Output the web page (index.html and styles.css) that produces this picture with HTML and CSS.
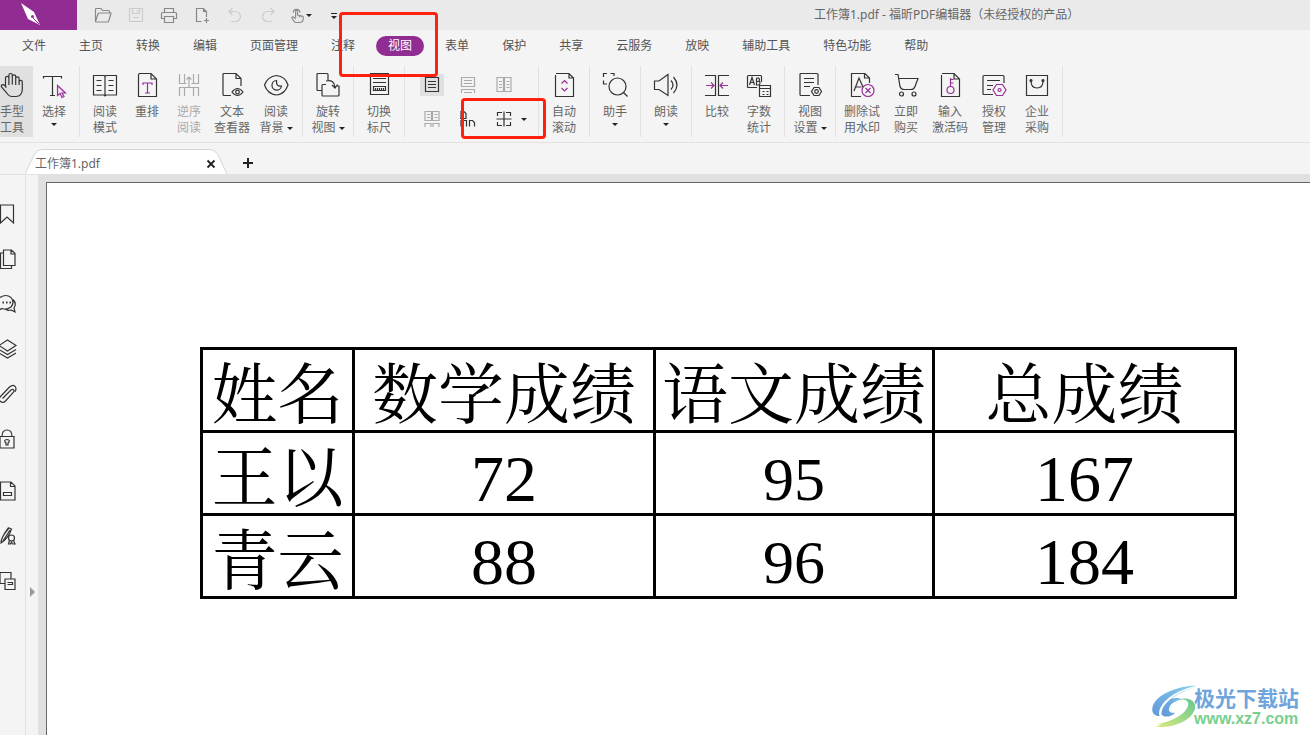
FILE: index.html
```html
<!DOCTYPE html>
<html lang="zh-CN">
<head>
<meta charset="utf-8">
<title>工作簿1.pdf - 福昕PDF编辑器</title>
<link rel="stylesheet" href="styles.css">
</head>
<body>
<header class="titlebar">
  <div class="brand"><svg width="22" height="24" viewBox="0 0 22 24"><path d="M1 1l13 9 6 13-12-6z" fill="#fff"/><path d="M19 22l-6-6" stroke="#912d92" stroke-width="1"/><circle cx="12.500" cy="14.500" r="1.500" fill="#912d92"/></svg></div>
  <div class="quick">
    <button aria-label="打开"><svg class="ico" viewBox="0 0 18 18"><path d="M1.500 15V3.500q0-1 1-1H7l1.500 2h6q1 0 1 1V7M1.500 15.500L4 8q.3-1 1.300-1H17l-2.200 8q-.3 1-1.300 1H2.500q-1 0-1-1"/></svg></button>
    <button aria-label="保存" disabled><svg class="ico" viewBox="0 0 18 18"><path d="M2.500 2.500h13v13h-13zM5.500 2.500v5h7v-5M10.500 4v2M6 11.500h6"/></svg></button>
    <button aria-label="打印"><svg class="ico" viewBox="0 0 18 18"><path d="M4.500 6V2.500h9V6M4.500 12.500h-3v-5q0-1 1-1h13q1 0 1 1v5h-3M4.500 10.500h9v6h-9z"/></svg></button>
    <button aria-label="新建"><svg class="ico" viewBox="0 0 18 18"><path d="M8.500 15.500h-5v-13h7l3 3V11M10.500 2.500v3h3M13.500 12v5M11 14.500h5"/></svg></button>
    <button aria-label="撤销" disabled><svg class="ico" viewBox="0 0 18 18"><path d="M6.500 2L3 5.500 6.500 9M3 5.500h6.500a5 5 0 0 1 0 10H5"/></svg></button>
    <button aria-label="重做" disabled><svg class="ico" viewBox="0 0 18 18"><path d="M11.500 2L15 5.500 11.500 9M15 5.500H8.500a5 5 0 0 0 0 10H13"/></svg></button>
    <button aria-label="触摸模式" class="touch"><svg class="ico" viewBox="0 0 18 18"><path d="M7 12V5a1 1 0 0 1 2 0v4l5 1q1 0 1 1v3q-.5 3-4 3H8q-2 0-3-2l-2-3q0-1.500 1.500-1L7 13M11 9.500v2M13 10v1.500M4.500 6.500a3.500 3.500 0 1 1 7 0"/></svg><span class="caret"></span></button>
    <button aria-label="自定义快速访问" class="custom"><span class="bar"></span><span class="caret"></span></button>
  </div>
  <h1 class="title">工作簿1.pdf - 福昕PDF编辑器（未经授权的产品）</h1>
</header>
<nav class="menu">
  <button>文件</button><button>主页</button><button>转换</button><button>编辑</button><button>页面管理</button><button>注释</button><button class="active">视图</button><button>表单</button><button>保护</button><button>共享</button><button>云服务</button><button>放映</button><button>辅助工具</button><button>特色功能</button><button>帮助</button>
</nav>
<section class="ribbon" aria-label="视图">
  <div class="group first">
    <button class="tool on"><svg class="big" viewBox="0 0 26 26"><path d="M6.500 15.500V6a1.700 1.700 0 0 1 3.400 0v7M9.900 6V3.200a1.700 1.700 0 0 1 3.400 0V12.500M13.300 4.500a1.700 1.700 0 0 1 3.400 0V13M16.700 9V6.500a1.700 1.700 0 0 1 3.400 0V13M20.100 10a1.600 1.600 0 0 1 3.200 0v7c0 4.500-2 7.500-6.300 7.500h-4c-3 0-4.500-2-6-4.500l-4.500-5c-1-2 1.600-3 3-1.700l2 2"/></svg>手型<br>工具</button>
    <button class="tool"><svg class="big" viewBox="0 0 26 26"><path d="M2.500 6.500V4.500h18v2M11.500 4.500v19M9 23.500h5"/><path class="p" d="M16.500 13.500v10l2.500-2 2 4 2-1-2-3.500h3.500z" fill="#f7e3f7"/></svg>选择<span class="caret"></span></button>
  </div>
  <div class="group">
    <button class="tool"><svg class="big" viewBox="0 0 26 26"><path d="M1.500 3.500h10.500l1 1 1-1h10.500v19.500H14l-1 1-1-1H1.500zM13 4.500V24M4.500 8.500h5M4.500 13.500h5M4.500 18.500h5M16.500 8.500h5M16.500 13.500h5M16.500 18.500h5"/></svg>阅读<br>模式</button>
    <button class="tool"><svg class="big" viewBox="0 0 26 26"><path d="M5 1.500h12l5.500 5.500v17.500h-18V3q0-1.500 1.500-1.500M17 1.500v5.500h5.500"/><path class="p" d="M9 13v-2h9v2M13.500 11v10M11 21h5"/></svg>重排</button>
    <button class="tool" disabled><svg class="big" viewBox="0 0 26 26"><path d="M3.500 2v9.500h5V2M22.500 2v9.500h-5V2M3.500 24v-8.500h5V24M22.500 24v-8.500h-5V24M8.500 11.500h2M15.500 11.500h2M8.500 15.500h9M13 15.500V5M10.500 7.500L13 5l2.500 2.500"/></svg>逆序<br>阅读</button>
    <button class="tool wide"><svg class="big" viewBox="0 0 26 26"><path d="M12 23.500H5q-1 0-1-1v-20q0-1 1-1h12l5 5V14M17 1.500v5h5"/><path d="M13 20q5.500-7 11 0-5.500 7-11 0z"/><circle cx="18.500" cy="20" r="1.800"/></svg>文本<br>查看器</button>
    <button class="tool wide"><svg class="big" viewBox="0 0 26 26"><path d="M1.500 13q3-8.500 12-9.500 9 1 11.500 9.500-3 9-11.500 10-9-1-12-10z"/><path d="M13.500 8.500a4.800 4.800 0 1 0 5 5.500q-5.500 1-5-5.500z"/></svg>阅读<br>背景<span class="caret in"></span></button>
  </div>
  <div class="group">
    <button class="tool"><svg class="big" viewBox="0 0 26 26"><path d="M7 18.500H3q-1 0-1-1v-15q0-1 1-1h9q1 0 1 1V8"/><path d="M11 12.500H8q-1 0-1 1v9.500q0 1 1 1h15q1 0 1-1v-9h-3M11 9q8-2 9 6M17 13l3 3 2.500-3.500"/></svg>旋转<br>视图<span class="caret in"></span></button>
  </div>
  <div class="group">
    <button class="tool"><svg class="big" viewBox="0 0 26 26"><path d="M4.500 1.500h18v21h-18zM7 6.500h13M7 10.500h13M7.500 14.500h12v4h-12zM9.500 18v-2M11.500 18v-2M13.500 18v-2M15.500 18v-2M17.500 18v-2"/></svg>切换<br>标尺</button>
  </div>
  <div class="group layouts">
    <button aria-label="单页" class="on"><svg class="mid" viewBox="0 0 18 18"><path d="M2.500 1.500h13v14h-13zM5 5.500h8M5 8.500h8M5 11.500h8"/></svg></button>
    <button aria-label="连续" class="dim"><svg class="mid" viewBox="0 0 18 18"><path d="M2.500 1.500h13v9h-13zM5 4.500h8M5 7.500h8M2.500 17v-3.500h13V17M5 16.500h8"/></svg></button>
    <button aria-label="双页" class="dim"><svg class="mid" viewBox="0 0 18 18"><path d="M2 1.500h6.500v14H2zM9.500 1.500H16v14H9.500zM4 5.500h3M4 8.500h3M4 11.500h3M11.500 5.500h3M11.500 8.500h3M11.500 11.500h3"/></svg></button>
    <button aria-label="连续双页" class="dim"><svg class="mid" viewBox="0 0 18 18"><path d="M2 1.500h6.500v9H2zM9.500 1.500H16v9H9.500zM4 4.500h3M4 7.500h3M11.500 4.500h3M11.500 7.500h3M2 17v-3.500h6V17M10 17v-3.500h6V17"/></svg></button>
    <button aria-label="封面页"><svg class="mid" viewBox="0 0 18 18"><path d="M2 8.500v-7h3l2 2v5M1 8.500h6.500M2 16.500v-6h5.500v6M10.500 16.500v-6h3l2 2v4"/></svg></button>
    <button aria-label="拆分"><svg class="mid" viewBox="0 0 18 18"><path d="M1.500 9h15M9 1.500v15M2.500 6V2.500H7M11 2.500h4.500V6M2.500 12v3.500H7M11 15.500h4.500V12"/></svg><span class="caret"></span></button>
  </div>
  <div class="group">
    <button class="tool"><svg class="big" viewBox="0 0 26 26"><path d="M5 1.500h13l4.500 4.500v18.500h-18V3M18 1.500v4.500h4.500"/><path class="p" d="M10.500 11.500l3-3 3 3M10.500 16l3 3 3-3"/></svg>自动<br>滚动</button>
  </div>
  <div class="group">
    <button class="tool"><svg class="big" viewBox="0 0 26 26"><path d="M1.500 5V1.500H5M8.500 1.500H12V4M1.500 8.500V12H5"/><circle cx="15.500" cy="14.500" r="8.500"/><path d="M21.500 20.500l4 4"/></svg>助手<span class="caret"></span></button>
  </div>
  <div class="group">
    <button class="tool"><svg class="big" viewBox="0 0 26 26"><path d="M1.500 9H6l9-6.500v21L6 17.500H1.500zM18 8.500q4 4.500 0 9M20.500 5q7 8 0 16"/></svg>朗读<span class="caret"></span></button>
  </div>
  <div class="group">
    <button class="tool"><svg class="big" viewBox="0 0 26 26"><path d="M1 3.500h10.500V23.500H1M25 3.500H14.500V23.500H25"/><path class="p" d="M2 13.500h8M7 10.500l3 3-3 3M24 13.500h-8M19 10.500l-3 3 3 3"/></svg>比较</button>
    <button class="tool"><svg class="big" viewBox="0 0 26 26"><path d="M11 15.500H2.500q-1 0-1-1v-10q0-1 1-1h12q1 0 1 1V10M3.500 13l2.500-7.500L8.500 13M4.500 10.500h3M10.500 6v7h2q1.500-.3 1.500-2t-1.500-1.500h-2M10.500 6h2q2 1.700 0 3.500M13.500 13.500v11h11v-11zM13.500 16.500h11M16.500 19.500h2M20.500 19.500h2M16.500 22.500h2M20.500 22.500h2"/></svg>字数<br>统计</button>
  </div>
  <div class="group">
    <button class="tool"><svg class="big" viewBox="0 0 26 26"><path d="M13 23.500H4q-1 0-1-1v-20q0-1 1-1h16q1 0 1 1V13M7 6.500h10M7 10.500h10M7 14.500h6"/><path d="M17 15.500h5l2.500 4-2.500 4h-5l-2.500-4z"/><circle cx="19.500" cy="19.500" r="1.800"/></svg>视图<br>设置<span class="caret in"></span></button>
  </div>
  <div class="group">
    <button class="tool wide"><svg class="big" viewBox="0 0 26 26"><path d="M12 24.500H2.500v-23H16l4.500 4.500v5M15.500 1.500V6h5M5 19l5-13 4 9M6.500 15h6"/><g class="p"><circle cx="19" cy="18.500" r="6"/><path d="M16.500 16l5 5M21.500 16l-5 5"/></g></svg>删除试<br>用水印</button>
    <button class="tool wide"><svg class="big" viewBox="0 0 26 26"><path d="M2 2.500h3l2 12q1 3 4 3h7q3 0 4-3l3-8H6"/><circle cx="8.500" cy="22" r="2"/><circle cx="21" cy="22" r="2"/></svg>立即<br>购买</button>
    <button class="tool wide"><svg class="big" viewBox="0 0 26 26"><path d="M5 1.500h12l5.500 5.500v17.500h-18V3M17 1.500v5.500h5.500"/><g class="p"><circle cx="13.500" cy="18" r="3.500"/><path d="M13.500 14.500V6M13.500 7.500h3M13.500 11h3"/></g></svg>输入<br>激活码</button>
    <button class="tool wide"><svg class="big" viewBox="0 0 26 26"><path d="M12 22.500H3q-1 0-1-1V4.500q0-1 1-1h19q1 0 1 1V11M6 8.500h13M6 13.500h6M6 17.500h4"/><path class="p" d="M15.500 12.500h6l3.500 5.500-3.500 5.500h-6L12 18z"/><circle class="p" cx="18.500" cy="18" r="1.500"/></svg>授权<br>管理</button>
    <button class="tool"><svg class="big" viewBox="0 0 26 26"><path d="M2.500 3.500h21v20h-21zM7 9q0 7 6 7t6-7"/><circle cx="7" cy="8.500" r="1" fill="#333"/><circle cx="19" cy="8.500" r="1" fill="#333"/></svg>企业<br>采购</button>
  </div>
</section>
<div class="tabs">
  <div class="tab"><svg class="shape" viewBox="0 0 202 25"><path d="M0 25L9 6q3-5.500 8-5.500h168q5 0 8 5.500l9 19" fill="#fff" stroke="#d6d6d6"/></svg><span class="name">工作簿1.pdf</span><button aria-label="关闭"><svg width="10" height="10" viewBox="0 0 10 10"><path d="M1.500 1.500l7 7M8.500 1.500l-7 7" stroke="#222" stroke-width="1.800"/></svg></button></div>
  <button class="add" aria-label="新建标签"><svg width="10" height="10" viewBox="0 0 10 10"><path d="M0 5h10M5 0v10" stroke="#222" stroke-width="2"/></svg></button>
</div>
<main class="work">
  <aside class="side">
    <button aria-label="书签"><svg class="ico" viewBox="0 0 18 20"><path d="M1.500 1h13v18L8 13 1.500 19z"/></svg></button>
    <button aria-label="页面"><svg class="ico" viewBox="0 0 18 20"><path d="M4.500 1h8l3.500 3.500V16.500H4.500zM12 1v4h4M4.500 4H1.500v15.500h11v-3"/></svg></button>
    <button aria-label="注释"><svg class="ico" viewBox="0 0 18 20"><path d="M1 3.500q6-4 11 0 4 5 0 9.500-5 3.500-9 1.500L0 16M14 5.500q4 4 1 8.500l1 4-4-2q-3 1-5-.5"/><path d="M3.500 8.500h1.500M7 8.500h1.500M10.500 8.500H12" stroke-width="1.800"/></svg></button>
    <button aria-label="图层"><svg class="ico" viewBox="0 0 18 20"><path d="M8.500 1l8.500 5.500-8.500 5.500L0 6.500zM0 10.500L8.500 15.500 17 10.500M0 14L8.500 19 17 14"/></svg></button>
    <button aria-label="附件"><svg class="ico" viewBox="0 0 18 20"><path d="M3.500 14.500l8.500-8.500q1.500-1.300 2.500-.3t0 2.500L6.500 17q-2.500 2.500-5 .5t0-5L10.500 3q3.500-3 5.500-.7t0 5.500"/></svg></button>
    <button aria-label="安全"><svg class="ico" viewBox="0 0 18 20"><path d="M1 7.500h14v11.500H1zM3 7.500q0-6.500 5-6.500t5 6.500M7 16v-2q-3-3 1-3.500 4 .5 1 3.500v2z"/></svg></button>
    <button aria-label="表单域" class="apart"><svg class="ico" viewBox="0 0 18 20"><path d="M1.500 1h10.500l4 4v14h-14.500zM11.500 1v4.500h4.500M4.500 11.500h8v3h-8z"/></svg></button>
    <button aria-label="签名"><svg class="ico" viewBox="0 0 18 20"><path d="M2 17q0-6 8-15l2.500 1q-3 9-10.500 14zM5 8l4.500-6.500M4 15L11 4"/><circle cx="12.500" cy="12" r="3"/><path d="M10.500 14.500l-1 3.500h2l1-2 1 2h2.500l-1.500-3.500"/></svg></button>
    <button aria-label="比较"><svg class="ico" viewBox="0 0 18 20"><path d="M5.500 12.500H1V1.500h11v6M6 8h10v10.500H6zM8.500 11.500h5v2h-5"/></svg></button>
  </aside>
  <div class="rail"><button aria-label="展开"></button></div>
  <div class="canvas">
    <article class="page">
      <table class="sheet">
        <colgroup><col class="c1"><col class="c2"><col class="c3"><col class="c4"></colgroup>
        <thead><tr><th>姓名</th><th>数学成绩</th><th>语文成绩</th><th>总成绩</th></tr></thead>
        <tbody>
          <tr><td>王以</td><td>72</td><td class="small">95</td><td>167</td></tr>
          <tr><td>青云</td><td>88</td><td class="small">96</td><td>184</td></tr>
        </tbody>
      </table>
    </article>
  </div>
</main>
<div class="mark mark-tab"></div>
<div class="mark mark-split"></div>
<div class="watermark">
  <svg width="46" height="44" viewBox="4 6 138 132"><defs><linearGradient id="lb" x1="1" y1="0" x2="0" y2="1"><stop offset="0" stop-color="#85d0ee"/><stop offset="1" stop-color="#6098d8"/></linearGradient><linearGradient id="lg" x1="1" y1="0" x2="0" y2="1"><stop offset="0" stop-color="#62c890"/><stop offset="1" stop-color="#dcea80"/></linearGradient></defs><path d="M140 11C95 9 14 35 8 78 6 95 18 103 30 102 20 75 60 28 140 11z" fill="url(#lb)"/><path d="M138 15C85 28 32 65 36 98 46 108 66 104 76 92 60 94 54 86 60 74 66 62 84 54 98 52 84 46 74 48 66 51 80 38 108 24 138 15z" fill="url(#lb)"/><path d="M84 55C112 46 124 62 110 82 96 104 56 122 18 127l18 0-18 8C72 138 126 116 136 80 140 54 112 42 84 55z" fill="url(#lg)"/></svg>
  <div class="words"><span class="site">极光下载站</span><span class="url">www.xz7.com</span></div>
</div>
</body>
</html>
```
FILE: styles.css
```css
* { box-sizing: border-box; }
body {
  margin: 0;
  height: 100vh;
  overflow: hidden;
  display: flex;
  flex-direction: column;
  position: relative;
  background: #f4f4f4;
  color: #555;
  font: 12px/16px "Noto Sans", "Noto Sans CJK SC", sans-serif;
}
button {
  border: 0;
  padding: 0;
  margin: 0;
  background: none;
  color: inherit;
  font: inherit;
}
svg { display: block; flex: none; fill: none; }
.ico, .big, .mid { stroke: #333; stroke-width: 1.2; overflow: visible; }
.ico { width: 18px; height: 18px; }
.mid { width: 18px; height: 18px; }
.big { width: 26px; height: 26px; margin: 0 auto 6px; }
.p { stroke: #96309a; }
.caret {
  display: block;
  width: 6px;
  border: 3px solid transparent;
  border-top-color: #222;
  border-bottom: 0;
}

.titlebar { display: flex; align-items: center; height: 30px; flex: none; background: #eaeaea; }
.brand { width: 77px; height: 30px; padding: 2px 0 0 20px; background: #912d92; }
.quick { display: flex; align-items: center; width: 737px; padding-left: 9px; }
.quick button { width: 33px; height: 28px; display: flex; align-items: center; justify-content: center; }
.quick .ico { stroke: #888; }
.quick button:disabled .ico { stroke: #ccc; }
.quick .touch .ico { width: 17px; }
.quick .custom { flex-direction: column; gap: 2px; padding-top: 2px; }
.bar { width: 6px; height: 1px; background: #222; }
.title { margin: 0; font-size: 12px; font-weight: 400; color: #666; white-space: nowrap; }

.menu { display: flex; align-items: center; gap: 33px; height: 32px; flex: none; padding-left: 22px; }
.menu button { white-space: nowrap; line-height: 20px; }
.menu .active { margin: 0 -12px; padding: 0 12px; border-radius: 10px; background: #912d92; color: #fff; }

.ribbon { display: flex; height: 81px; flex: none; padding: 4px 0 5px; border-bottom: 1px solid #e2e2e2; }
.group { display: flex; align-items: flex-start; padding: 0 4px; border-right: 1px solid #e2e2e2; }
.group.first { padding-left: 0; margin-left: -9px; }
.tool { width: 42px; padding: 6px 0 1px; display: block; text-align: center; white-space: nowrap; line-height: 16px; color: #666; }
.group, .ribbon { align-items: flex-start; }
.group { height: 71px; }
.tool.wide { width: 44px; }
.on { background: #e0e0e0; }
.tool .caret { margin: 3px auto 0; }
.tool .caret.in { display: inline-block; margin: 0 0 2px 3px; }
.tool:disabled { color: #aaa; }
.tool:disabled .big, .dim .mid { stroke: #aaa; }
.layouts { display: grid; grid-template-columns: 36px 36px 48px; grid-template-rows: 34px 34px; padding: 2px 4px 0 9px; }
.layouts button { display: flex; align-items: center; gap: 8px; height: 22px; width: 24px; margin: 6px; padding-left: 3px; }

.tabs { display: flex; height: 32px; flex: none; align-items: flex-end; padding-left: 25px; border-bottom: 1px solid #e2e2e2; }
.tab { position: relative; display: flex; align-items: center; justify-content: space-between; width: 202px; height: 25px; padding: 5px 11px 0 10px; color: #666; }
.shape { position: absolute; inset: 0; width: 202px; height: 25px; }
.tab .name, .tab button { position: relative; }
.add { margin: 0 0 6px 16px; }

.work { display: flex; flex: 1; min-height: 0; }
.side { width: 26px; flex: none; padding-top: 16px; border-right: 1px solid #e2e2e2; }
.side button { display: flex; align-items: center; width: 25px; height: 45px; }
.side .ico { height: 20px; margin-left: -1px; }
.side .apart { margin-top: 7px; }
.rail { width: 12px; flex: none; padding: 412px 0 0 4px; }
.rail button { display: block; width: 0; height: 10px; border: 5px solid transparent; border-left-color: #999; border-right: 0; }
.canvas { flex: 1; display: flex; min-width: 0; padding: 7px 0 0 8px; background: #e0e0e0; overflow: hidden; }
.page { flex: 1; min-width: 0; padding: 164px 0 0 153px; background: #fff; border: 1px solid #666; border-width: 1px 0 0 1px; }

.sheet { border-collapse: collapse; table-layout: fixed; width: 1037px; color: #000; font: 400 66px/68px "Liberation Serif", "Noto Serif CJK SC", "Noto Sans CJK SC", serif; }
.sheet th, .sheet td { height: 83px; padding: 12px 0 0; border: 3px solid #000; text-align: center; font-weight: 400; white-space: nowrap; }
.sheet .small { font-size: 62px; }
.c1 { width: 152px; }
.c2 { width: 301px; }
.c3 { width: 279px; }
.c4 { width: 302px; }

.mark { position: absolute; border: 3px solid #ff2010; border-radius: 4px; }
.mark-tab { left: 339px; top: 12px; width: 99px; height: 65px; }
.mark-split { left: 461px; top: 98px; width: 85px; height: 41px; }

.watermark { position: absolute; right: 11px; bottom: 7px; display: flex; align-items: center; }
.watermark svg { margin-right: -3px; }
.words { display: flex; flex-direction: column; color: #6fa5dc; font-family: "Liberation Sans", "Noto Sans CJK SC", sans-serif; font-weight: 700; }
.site { font-size: 21px; line-height: 25px; }
.url { font-size: 16px; line-height: 16px; color: #78cf8e; }
```
